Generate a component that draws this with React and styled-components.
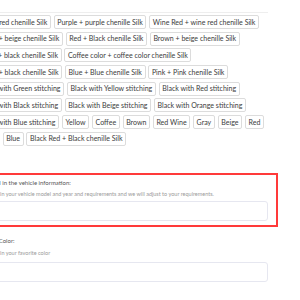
import React from 'react';
import styled, { createGlobalStyle } from 'styled-components';

const GlobalStyle = createGlobalStyle`
  html, body {
    margin: 0;
    padding: 0;
    background: #fff;
    overflow: hidden;
  }
  body {
    font-family: Lato, "Liberation Sans", sans-serif;
  }
`;

const rows = [
  ['Red + red chenille Silk', 'Purple + purple chenille Silk', 'Wine Red + wine red chenille Silk'],
  ['Beige + beige chenille Silk', 'Red + Black chenille Silk', 'Brown + beige chenille Silk'],
  ['Black + black chenille Silk', 'Coffee color + coffee color chenille Silk'],
  ['Beige + black chenille Silk', 'Blue + Blue chenille Silk', 'Pink + Pink chenille Silk'],
  ['Black with Green stitching', 'Black with Yellow stitching', 'Black with Red stitching'],
  ['Black with Black stitching', 'Black with Beige stitching', 'Black with Orange stitching'],
  ['Black with Blue stitching', 'Yellow', 'Coffee', 'Brown', 'Red Wine', 'Gray', 'Beige', 'Red'],
  ['Black', 'Blue', 'Black Red + Black chenille Silk'],
];

const Page = styled.div`
  width: 292px;
  margin-left: -24px;
  padding-top: 12px;
`;

const Divider = styled.div`
  height: 1px;
  background: #eeeeee;
  margin-bottom: 2px;
`;

const ChipList = styled.div`
  display: flex;
  flex-direction: column;
  gap: 2.7px;
`;

const ChipRow = styled.div`
  display: flex;
  gap: 2.8px;
`;

const Chip = styled.span`
  display: inline-flex;
  align-items: center;
  height: 14px;
  box-sizing: border-box;
  padding: 0 2.6px;
  border: 1px solid #dcdcdc;
  border-radius: 2px;
  font-size: 7.05px;
  color: #3c3c3c;
  white-space: nowrap;
`;

const Highlight = styled.div`
  margin: 27px -10px 0 -10px;
  padding: 4px 8px 4px 8px;
  border: 2px solid #ff3a3a;
`;

const Field = styled.div`
  margin-top: ${(p) => p.$top || 0}px;
`;

const Label = styled.div`
  font-size: 6px;
  line-height: 8px;
  color: #555;
`;

const Hint = styled.div`
  font-size: 5.5px;
  line-height: 8px;
  color: #9a9a9a;
  margin-top: ${(p) => p.$gap}px;
`;

const Input = styled.div`
  height: 20px;
  box-sizing: border-box;
  border: 1px solid #e6e7f0;
  border-radius: 3px;
  margin-top: ${(p) => p.$gap}px;
`;

export default function App() {
  return (
    <>
      <GlobalStyle />
      <Page>
        <Divider />
        <ChipList>
          {rows.map((row, i) => (
            <ChipRow key={i}>
              {row.map((c) => <Chip key={c}>{c}</Chip>)}
            </ChipRow>
          ))}
        </ChipList>
        <Highlight>
          <Label>Please fill in the vehicle information:</Label>
          <Hint $gap={3}>Please fill in your vehicle model and year and requirements and we will adjust to your requirements.</Hint>
          <Input $gap={3} />
        </Highlight>
        <Field $top={10}>
          <Label>Favorite Color:</Label>
          <Hint $gap={4}>Please fill in your favorite color</Hint>
          <Input $gap={5} />
        </Field>
      </Page>
    </>
  );
}
